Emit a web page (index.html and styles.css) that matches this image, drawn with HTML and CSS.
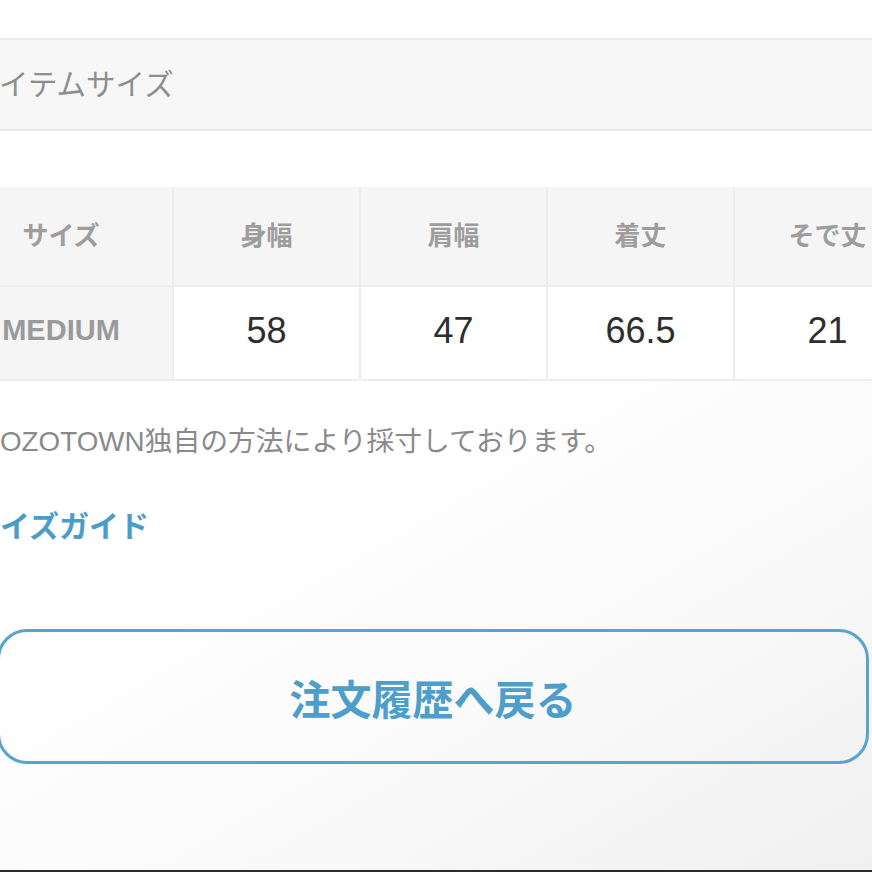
FILE: index.html
```html
<!DOCTYPE html>
<html lang="ja">
<head>
<meta charset="utf-8">
<title>アイテムサイズ</title>
<link rel="stylesheet" href="styles.css">
</head>
<body>
<div class="page">
  <div class="section-head">アイテムサイズ</div>
  <div class="size-table">
    <div class="cell head first">サイズ</div>
    <div class="cell head">身幅</div>
    <div class="cell head">肩幅</div>
    <div class="cell head">着丈</div>
    <div class="cell head">そで丈</div>
    <div class="cell label first">MEDIUM</div>
    <div class="cell value">58</div>
    <div class="cell value">47</div>
    <div class="cell value">66.5</div>
    <div class="cell value">21</div>
  </div>
  <p class="note">ZOZOTOWN独自の方法により採寸しております。</p>
  <a class="guide-link" href="#">サイズガイド</a>
  <a class="back-btn" href="#">注文履歴へ戻る</a>
</div>
<div class="edge"></div>
</body>
</html>
```
FILE: styles.css
```css
html, body {
  margin: 0;
  padding: 0;
}
body {
  width: 872px;
  height: 872px;
  overflow: hidden;
  display: flex;
  flex-direction: column;
  background: linear-gradient(150deg, #ffffff 50%, #f8f8f8 78%, #f0f0f0 100%);
  font-family: "Liberation Sans", "Noto Sans CJK JP", sans-serif;
}
.page {
  flex: 1;
  margin-left: -50px;
  width: 980px;
  display: flex;
  flex-direction: column;
  padding-top: 38px;
}
.section-head {
  height: 83px;
  box-sizing: content-box;
  padding: 0 0 6px 21px;
  border-top: 2px solid #ececec;
  border-bottom: 2px solid #e7e7e7;
  background: #f7f7f7;
  display: flex;
  align-items: center;
  font-family: "Noto Sans CJK JP", sans-serif;
  font-size: 29.5px;
  line-height: 40px;
  color: #8e8e8e;
  width: 930px;
}
.size-table {
  margin-top: 56px;
  display: grid;
  grid-template-columns: 222px repeat(4, 185px);
  grid-template-rows: 98px 92px;
  gap: 2px;
  background: #ededed;
  border-bottom: 2px solid #ededed;
  width: 968px;
}
.cell {
  display: flex;
  align-items: center;
  justify-content: center;
}
.head {
  background: #f5f5f5;
  font-family: "Noto Sans CJK JP", sans-serif;
  font-weight: 700;
  font-size: 26px;
  color: #9d9d9d;
  padding-bottom: 6px;
}
.label {
  background: #f5f5f5;
  font-weight: 700;
  font-size: 29px;
  color: #9a9a9a;
  padding-bottom: 5px;
}
.value {
  background: #ffffff;
  font-size: 36px;
  color: #2e2e2e;
  padding-bottom: 5px;
}
.note {
  margin: 42px 0 0 33px;
  font-family: "Liberation Sans", "Noto Sans CJK JP", sans-serif;
  font-size: 27.8px;
  line-height: 38px;
  color: #8a8a8a;
}
.guide-link {
  margin: 43px 0 0 20px;
  align-self: flex-start;
  font-family: "Noto Sans CJK JP", sans-serif;
  font-weight: 700;
  font-size: 30px;
  line-height: 40px;
  color: #4b9dc8;
  text-decoration: none;
}
.back-btn {
  margin: 85px 0 0 47px;
  width: 866px;
  height: 129px;
  box-sizing: content-box;
  border: 3px solid #5aa3cc;
  border-radius: 30px;
  display: flex;
  align-items: center;
  justify-content: center;
  font-family: "Noto Sans CJK JP", sans-serif;
  font-weight: 700;
  font-size: 41px;
  color: #4d9ec9;
  text-decoration: none;
}
.edge {
  height: 2px;
  background: #2b2b2b;
  flex-shrink: 0;
}
```
